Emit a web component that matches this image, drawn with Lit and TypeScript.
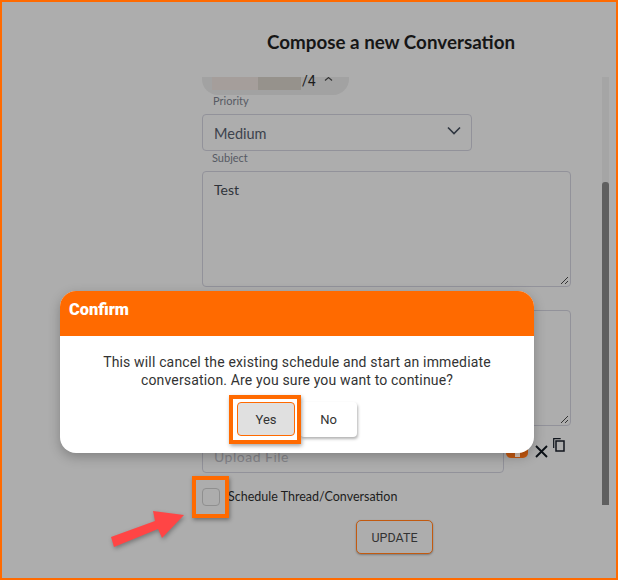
import { LitElement, html, css } from "lit";
import { customElement } from "lit/decorators.js";

@customElement("app-root")
export class AppRoot extends LitElement {
  static styles = css`
    :host { display: block; }
    * { box-sizing: border-box; }
    .frame { position: relative; width: 618px; height: 580px; border: 2px solid #ff6a00; background: #adadad; overflow: hidden; font-family: Lato, sans-serif; }
    h1 { margin: 0; height: 75px; padding: 28px 0 0 164px; text-align: center; font: 700 18.8px/24px Lato, sans-serif; color: #161616; }
    .body { display: flex; align-items: flex-start; }
    .form { width: 598px; padding-left: 200px; }
    .chip { width: 147px; height: 18px; background: #a2a2a2; border-radius: 0 0 16px 16px; display: flex; padding-left: 10px; font: 14px/8px Roboto, sans-serif; color: #1c1c1c; }
    .mask { width: 89px; height: 13px; background: linear-gradient(90deg, #a59e9b 52%, #96928c 52%); }
    .chip span { margin-left: 1px; }
    .chip svg { display: block; margin-left: 8px; }
    label { display: block; font-size: 11px; line-height: 11px; color: #565a63; padding-left: 11px; }
    .plabel { height: 19px; }
    .select { width: 270px; height: 37px; border: 1px solid #92929a; border-radius: 4px; display: flex; align-items: center; justify-content: space-between; padding: 1px 10px 0 11px; font-size: 14.5px; color: #3c424c; }
    .select svg { display: block; margin-top: -5px; }
    .slabel { height: 20px; padding-top: 1px; padding-left: 10px; }
    .area { position: relative; width: 369px; height: 116px; border: 1px solid #92929a; border-radius: 4px; padding: 9px 11px; font-size: 14px; line-height: 18px; color: #2f333a; }
    .area svg { position: absolute; right: 1px; bottom: 1px; }
    .second { margin-top: 23px; }
    .upload { display: flex; margin-top: 8px; height: 39px; }
    .file { width: 302px; height: 39px; border: 1px solid #92929a; border-radius: 4px; padding: 13px 11px 0; font-size: 14px; line-height: 18px; letter-spacing: 0.5px; color: #85858a; }
    .attach { position: relative; width: 22px; height: 24px; margin-left: 2px; background: #c75a10; border-radius: 0 0 5px 5px; }
    .attach b { position: absolute; left: 9px; top: 18px; width: 5px; height: 5px; background: #d9c9bd; }
    .clear { margin: 11px 0 0 7px; display: block; }
    .copy { margin: 4px 0 0 5px; display: block; }
    .check { display: flex; align-items: center; margin-top: 15px; height: 18px; font-size: 12.5px; color: #1d1d1d; }
    .check span { margin-top: -2px; }
    .box { width: 18px; height: 18px; border: 1px solid #8f8f8f; border-radius: 4px; margin-right: 8px; }
    .actions { display: flex; padding-left: 154px; margin-top: 14px; }
    .update { width: 77px; height: 34px; border: 1px solid #c25a10; border-radius: 5px; background: #adadad; box-shadow: 0 1px 2px rgba(0,0,0,.3); font: 12.5px Roboto, sans-serif; color: #333; padding: 0; }
    .track { width: 7px; margin-left: 2px; height: 428px; background: #a5a5a5; display: flex; flex-direction: column; justify-content: flex-end; }
    .thumb { height: 323px; background: #5f5f5f; border-radius: 3px 3px 0 0; }
    .modal { position: absolute; left: 58px; top: 289px; width: 474px; height: 162px; background: #fff; border-radius: 16px; overflow: hidden; box-shadow: 0 4px 12px rgba(0,0,0,.25); font-family: Roboto, sans-serif; }
    .mhead { height: 45px; background: #ff6a00; color: #fff; font: 900 16.4px/37px Roboto, sans-serif; padding-left: 9px; }
    .mtext { margin: 17px 0 0; text-align: center; font-size: 14px; line-height: 18px; letter-spacing: 0.16px; color: #333; padding: 0 30px; }
    .btns { display: flex; justify-content: center; margin-top: 13px; }
    button { cursor: pointer; }
    .yes, .no { border-radius: 4px; font: 13px Roboto, sans-serif; color: #333; padding: 0; }
    .yes { width: 58px; height: 34px; background: #e0e0e0; border: 1px solid #ff6a00; }
    .no { width: 57px; height: 35px; margin-left: 5px; background: #fff; border: 0; box-shadow: 1px 2px 3px rgba(0,0,0,.3); }
    .hl { position: absolute; border: 4px solid #ff6a00; box-shadow: 1px 2px 4px rgba(0,0,0,.35); }
    .hl-yes { left: 227px; top: 393px; width: 72px; height: 49px; }
    .hl-check { left: 190px; top: 474px; width: 37px; height: 42px; }
    .arrow { position: absolute; left: 105px; top: 506px; filter: drop-shadow(1px 2px 2px rgba(0,0,0,.3)); }
  `;

  render() {
    return html`
      <div class="frame">
        <h1>Compose a new Conversation</h1>
        <div class="body">
          <div class="form">
            <div class="chip"><div class="mask"></div><span>/4</span>
              <svg width="9" height="4" viewBox="0 0 9 4"><path d="M1 3.5L4.5 .5 8 3.5" fill="none" stroke="#333" stroke-width="1.1"/></svg>
            </div>
            <label class="plabel">Priority</label>
            <div class="select">Medium
              <svg width="14" height="9" viewBox="0 0 14 9"><path d="M1 1.5l6 6 6-6" fill="none" stroke="#2f3640" stroke-width="1.6"/></svg>
            </div>
            <label class="slabel">Subject</label>
            <div class="area">Test
              <svg width="9" height="9" viewBox="0 0 9 9"><path d="M1 8l7-7M5 8l3-3" stroke="#333" stroke-width="1"/></svg>
            </div>
            <div class="area second">
              <svg width="9" height="9" viewBox="0 0 9 9"><path d="M1 8l7-7M5 8l3-3" stroke="#333" stroke-width="1"/></svg>
            </div>
            <div class="upload">
              <div class="file">Upload File</div>
              <div class="attach"><b></b></div>
              <svg class="clear" width="13" height="13" viewBox="0 0 13 13"><path d="M1 1l11 11M12 1L1 12" stroke="#0b1016" stroke-width="1.9"/></svg>
              <svg class="copy" width="12" height="14" viewBox="0 0 12 14"><path d="M.7 10V.7h7" fill="none" stroke="#10151c" stroke-width="1.2"/><rect x="3" y="3" width="8" height="10" fill="none" stroke="#10151c" stroke-width="1.5"/></svg>
            </div>
            <div class="check"><div class="box"></div><span>Schedule Thread/Conversation</span></div>
            <div class="actions"><button class="update">UPDATE</button></div>
          </div>
          <div class="track"><div class="thumb"></div></div>
        </div>
        <div class="modal">
          <div class="mhead">Confirm</div>
          <p class="mtext">This will cancel the existing schedule and start an immediate conversation. Are you sure you want to continue?</p>
          <div class="btns"><button class="yes">Yes</button><button class="no">No</button></div>
        </div>
        <div class="hl hl-yes"></div>
        <div class="hl hl-check"></div>
        <svg class="arrow" width="80" height="42" viewBox="0 0 80 42"><path d="M4 29L48 13 46 3 77 7 55 30 51 21 7 39z" fill="#ff4545"/></svg>
      </div>
    `;
  }
}
